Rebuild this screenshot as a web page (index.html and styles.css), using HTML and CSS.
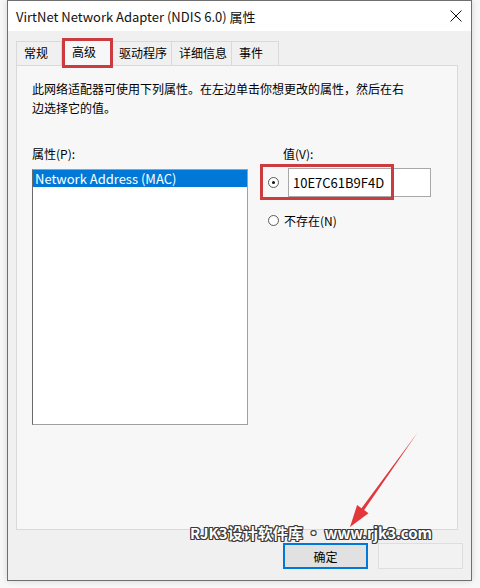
FILE: index.html
```html
<!DOCTYPE html>
<html lang="zh-CN">
<head>
  <meta charset="UTF-8">
  <title>VirtNet Network Adapter (NDIS 6.0) 属性</title>
  <link rel="stylesheet" href="styles.css">
</head>
<body>
  <div class="window">
    <div class="titlebar">
      <span class="title">VirtNet Network Adapter (NDIS 6.0) 属性</span>
      <svg class="close" width="12" height="12" viewBox="0 0 12 12">
        <path d="M0.5 0.5 L11.5 11.5 M11.5 0.5 L0.5 11.5" stroke="#111" stroke-width="1"/>
      </svg>
    </div>

    <div class="client">
      <div class="tabs">
        <div class="tab w46">常规</div>
        <div class="tab w50 active">高级</div>
        <div class="tab w60">驱动程序</div>
        <div class="tab w60">详细信息</div>
        <div class="tab w47">事件</div>
      </div>

      <div class="panel">
        <p class="desc">此网络适配器可使用下列属性。在左边单击你想更改的属性，然后在右<br>边选择它的值。</p>
        <div class="columns">
          <div class="col-left">
            <div class="label">属性(P):</div>
            <div class="listbox">
              <div class="item selected">Network Address (MAC)</div>
            </div>
          </div>
          <div class="col-right">
            <div class="label indent">值(V):</div>
            <div class="radio-row first">
              <span class="radio checked"></span>
              <div class="textbox">10E7C61B9F4D</div>
            </div>
            <div class="radio-row">
              <span class="radio"></span>
              <span class="radio-text">不存在(N)</span>
            </div>
          </div>
        </div>
      </div>

      <div class="buttons">
        <button class="btn default">确定</button>
        <button class="btn blank"></button>
      </div>
    </div>
  </div>

  <!-- annotations drawn on top of the dialog -->
  <div class="mark mark-tab"></div>
  <div class="mark mark-value"></div>

  <svg class="arrow" width="480" height="588" viewBox="0 0 480 588">
    <polygon points="418,432 364.1,510.1 368.5,513.3 350,527 357.1,505.1 361.5,508.3" fill="#e2383c"/>
  </svg>

  <span class="wm w1">www.rjk3.com</span>
  <span class="wm w2">www.rjk3.com</span>
  <span class="wm w3">www.rjk3.com</span>
  <span class="wm w4">www.rjk3.com</span>
  <span class="wm w5">www.rjk3.com</span>

  <div class="stamp">RJK3设计软件库 • www.rjk3.com</div>
</body>
</html>
```

FILE: styles.css
```css
body {
  margin: 0;
  width: 480px;
  height: 588px;
  position: relative;
  overflow: hidden;
  background: #f7f7f7;
  font-family: "Noto Sans CJK SC", "Noto Sans", sans-serif;
  font-size: 12px;
  color: #000;
}

.window {
  box-sizing: border-box;
  margin-left: 7px;
  width: 465px;
  height: 581px;
  border: 1px solid #6f6f6f;
  box-shadow: 0 0 6px rgba(0, 0, 0, 0.15);
  display: flex;
  flex-direction: column;
}

.titlebar {
  height: 30px;
  background: #fff;
  display: flex;
  align-items: center;
  justify-content: space-between;
  padding: 0 9px 0 8px;
}
.title { font-size: 13px; color: #111; }
.close { display: block; margin-top: -1px; }

.client {
  flex: 1;
  background: #f0f0f0;
  padding: 7px 0 0 8px;
  display: flex;
  flex-direction: column;
}

/* tab strip */
.tabs {
  display: flex;
  align-items: flex-end;
  height: 27px;
}
.tab {
  box-sizing: border-box;
  height: 24px;
  line-height: 22px;
  padding-left: 7px;
  border: 1px solid #d9d9d9;
  border-bottom: none;
  border-left: none;
  background: #f0f0f0;
}
.tab:first-child { border-left: 1px solid #d9d9d9; }
.tab.active {
  height: 27px;
  line-height: 24px;
  padding-left: 9px;
  background: #f7f7f7;
  border-left: 1px solid #d9d9d9;
  margin-bottom: -1px;
  position: relative;
}
.w46 { width: 46px; }
.w47 { width: 47px; }
.w50 { width: 50px; }
.w60 { width: 60px; }

.panel {
  box-sizing: border-box;
  width: 442px;
  height: 465px;
  border: 1px solid #d9d9d9;
  background: #f7f7f7;
  padding: 13px 15px 0;
}

.desc {
  margin: 0;
  line-height: 19px;
}

.columns {
  display: flex;
  gap: 20px;
  margin-top: 27px;
}
.col-left { width: 216px; }

.label { line-height: 19px; }
.label.indent { padding-left: 15px; }

.listbox {
  box-sizing: border-box;
  margin-top: 6px;
  height: 256px;
  background: #fff;
  border: 1px solid #a0a0a0;
  border-left-color: #6a6a6a;
}
.item {
  height: 17px;
  line-height: 17px;
  padding-left: 2px;
  font-size: 13px;
}
.item.selected { background: #0078d7; color: #fff; }

.radio-row {
  display: flex;
  align-items: center;
  gap: 9px;
  height: 29px;
}
.radio-row.first { margin-top: 5px; }
.radio-row + .radio-row { margin-top: 13px; height: 20px; gap: 5px; }

.radio {
  box-sizing: border-box;
  width: 11px;
  height: 11px;
  border: 1px solid #5b5b5b;
  border-radius: 50%;
  background: #fff;
  position: relative;
}
.radio.checked::after {
  content: "";
  position: absolute;
  left: 3px;
  top: 3px;
  width: 3px;
  height: 3px;
  border-radius: 50%;
  background: #111;
}

.textbox {
  box-sizing: border-box;
  width: 143px;
  height: 29px;
  background: #fff;
  border: 1px solid #a8a8a8;
  padding-left: 4px;
  line-height: 27px;
  font-size: 13px;
}

.buttons {
  display: flex;
  justify-content: flex-end;
  gap: 10px;
  padding: 13px 8px 0 0;
}
.btn {
  box-sizing: border-box;
  width: 85px;
  height: 26px;
  font: inherit;
  background: #e1e1e1;
  border: 1px solid #adadad;
  padding: 0;
}
.btn.default { border: 2px solid #0078d7; }
.btn.blank { background: #f2f2f2; border-color: #dedede; }

/* red annotation boxes */
.mark {
  position: absolute;
  border: 3px solid #cc3b40;
  box-sizing: border-box;
}
.mark-tab { left: 62px; top: 38px; width: 51px; height: 30px; }
.mark-value { left: 260px; top: 164px; width: 134px; height: 36px; }

.arrow { position: absolute; left: 0; top: 0; }

/* faint site watermarks */
.wm {
  position: absolute;
  font-size: 17px;
  font-weight: bold;
  color: rgba(0, 0, 0, 0.022);
  transform: rotate(-32deg);
  white-space: nowrap;
}
.w1 { left: 20px; top: 230px; }
.w2 { left: 120px; top: 395px; }
.w3 { left: 240px; top: 310px; }
.w4 { left: 330px; top: 60px; }
.w5 { left: 100px; top: 200px; }

.stamp {
  position: absolute;
  left: 190px;
  top: 522px;
  font-size: 15px;
  font-weight: bold;
  color: #fff;
  white-space: nowrap;
  text-shadow: 1px 0 0 #3a3a3a, -1px 0 0 #3a3a3a, 0 1px 0 #3a3a3a, 0 -1px 0 #3a3a3a,
    1px 1px 0 #3a3a3a, -1px -1px 0 #3a3a3a, 1px -1px 0 #3a3a3a, -1px 1px 0 #3a3a3a;
}
```
